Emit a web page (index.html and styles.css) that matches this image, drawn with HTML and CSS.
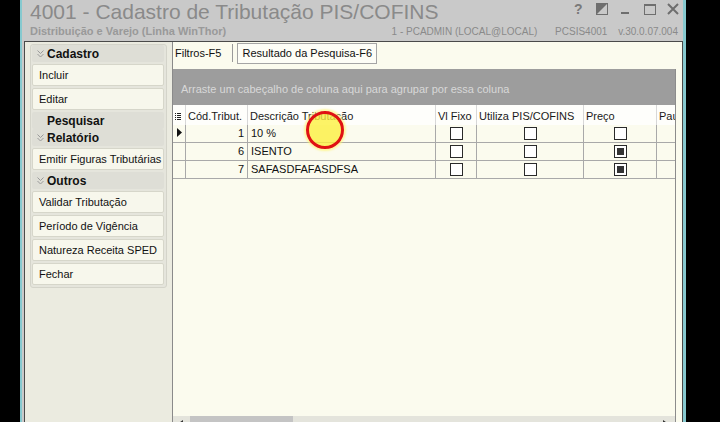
FILE: index.html
```html
<!DOCTYPE html>
<html lang="pt-BR">
<head>
    <meta charset="UTF-8">
    <title>4001 - Cadastro de Tributação PIS/COFINS</title>
    <link rel="stylesheet" href="styles.css">
</head>
<body>
    <div class="window">
        <div class="titlebar">
            <div class="title-left">
                <div class="app-title">4001 - Cadastro de Tributação PIS/COFINS</div>
                <div class="app-sub">Distribuição e Varejo (Linha WinThor)</div>
            </div>
            <div class="title-right">
                <div class="win-controls">
                    <span class="ctl ctl-help">?</span>
                    <svg class="ctl ctl-skin" width="12" height="12" viewBox="0 0 12 12">
                        <rect x="0.5" y="0.5" width="11" height="11" fill="none" stroke="#6e6e6e"/>
                        <polygon points="0,0 12,0 0,12" fill="#6e6e6e"/>
                    </svg>
                    <svg class="ctl ctl-min" width="8" height="12" viewBox="0 0 8 12">
                        <rect x="0" y="9" width="8" height="2" fill="#6e6e6e"/>
                    </svg>
                    <svg class="ctl ctl-max" width="12" height="12" viewBox="0 0 12 12">
                        <rect x="0.5" y="1.5" width="11" height="10" fill="none" stroke="#6e6e6e"/>
                        <rect x="0" y="1" width="12" height="2" fill="#6e6e6e"/>
                    </svg>
                    <svg class="ctl ctl-close" width="12" height="12" viewBox="0 0 12 12">
                        <path d="M1 1 L11 11 M11 1 L1 11" stroke="#6e6e6e" stroke-width="2"/>
                    </svg>
                </div>
                <div class="session-info">
                    <span>1 - PCADMIN (LOCAL@LOCAL)</span>
                    <span class="gap">PCSIS4001</span>
                    <span class="gap-sm">v.30.0.07.004</span>
                </div>
            </div>
        </div>

        <div class="frame">
            <aside class="side">
                <div class="nav">
                    <div class="nav-group">
                        <div class="nav-head">
                            <svg class="chev" width="7" height="8" viewBox="0 0 7 8"><path d="M0.5 0.5 L3.5 3.5 L6.5 0.5 M0.5 4 L3.5 7 L6.5 4" fill="none" stroke="#9a9a9a"/></svg>
                            Cadastro
                        </div>
                        <div class="nav-item">Incluir</div>
                        <div class="nav-item">Editar</div>
                    </div>
                    <div class="nav-group nav-group-flat">
                        <div class="nav-head nav-head-plain">Pesquisar</div>
                    </div>
                    <div class="nav-group">
                        <div class="nav-head">
                            <svg class="chev" width="7" height="8" viewBox="0 0 7 8"><path d="M0.5 0.5 L3.5 3.5 L6.5 0.5 M0.5 4 L3.5 7 L6.5 4" fill="none" stroke="#9a9a9a"/></svg>
                            Relatório
                        </div>
                        <div class="nav-item">Emitir Figuras Tributárias</div>
                    </div>
                    <div class="nav-group">
                        <div class="nav-head">
                            <svg class="chev" width="7" height="8" viewBox="0 0 7 8"><path d="M0.5 0.5 L3.5 3.5 L6.5 0.5 M0.5 4 L3.5 7 L6.5 4" fill="none" stroke="#9a9a9a"/></svg>
                            Outros
                        </div>
                        <div class="nav-item">Validar Tributação</div>
                        <div class="nav-item">Período de Vigência</div>
                        <div class="nav-item">Natureza Receita SPED</div>
                        <div class="nav-item">Fechar</div>
                    </div>
                </div>
            </aside>

            <main class="content">
                <div class="tabs">
                    <div class="tab">Filtros-F5</div>
                    <div class="tab-sep"></div>
                    <div class="tab tab-active">Resultado da Pesquisa-F6</div>
                </div>

                <div class="grid">
                    <div class="group-panel">Arraste um cabeçalho de coluna aqui para agrupar por essa coluna</div>

                    <div class="grid-head">
                        <div class="cell-ind">
                            <svg width="6" height="8" viewBox="0 0 6 8">
                                <path d="M0 0.5 H1 M2 0.5 H6 M0 2.5 H1 M2 2.5 H6 M0 4.5 H1 M2 4.5 H6 M0 6.5 H1 M2 6.5 H6" stroke="#222" stroke-width="1"/>
                            </svg>
                        </div>
                        <div>Cód.Tribut.</div>
                        <div>Descrição Tributação</div>
                        <div>Vl Fixo</div>
                        <div>Utiliza PIS/COFINS</div>
                        <div>Preço</div>
                        <div class="cell-clip">Pau</div>
                    </div>

                    <div class="grid-row">
                        <div class="cell-ind">
                            <svg width="5" height="9" viewBox="0 0 5 9"><polygon points="0,0 5,4.5 0,9" fill="#111"/></svg>
                        </div>
                        <div class="num">1</div>
                        <div>10 %</div>
                        <div class="cell-chk"><span class="chk"></span></div>
                        <div class="cell-chk"><span class="chk"></span></div>
                        <div class="cell-chk"><span class="chk"></span></div>
                        <div></div>
                    </div>
                    <div class="grid-row">
                        <div class="cell-ind"></div>
                        <div class="num">6</div>
                        <div>ISENTO</div>
                        <div class="cell-chk"><span class="chk"></span></div>
                        <div class="cell-chk"><span class="chk"></span></div>
                        <div class="cell-chk"><span class="chk on"></span></div>
                        <div></div>
                    </div>
                    <div class="grid-row">
                        <div class="cell-ind"></div>
                        <div class="num">7</div>
                        <div>SAFASDFAFASDFSA</div>
                        <div class="cell-chk"><span class="chk"></span></div>
                        <div class="cell-chk"><span class="chk"></span></div>
                        <div class="cell-chk"><span class="chk on"></span></div>
                        <div></div>
                    </div>

                    <div class="grid-fill"></div>

                    <div class="hscroll">
                        <div class="sb-btn">
                            <svg width="5" height="7" viewBox="0 0 5 7"><polygon points="5,0 0,3.5 5,7" fill="#333"/></svg>
                        </div>
                        <div class="sb-thumb"></div>
                        <div class="sb-track"></div>
                        <div class="sb-btn">
                            <svg width="5" height="7" viewBox="0 0 5 7"><polygon points="0,0 5,3.5 0,7" fill="#333"/></svg>
                        </div>
                    </div>
                </div>
            </main>
        </div>
    </div>

    <!-- click highlight left by the screen recorder -->
    <div class="cursor-mark"></div>
</body>
</html>
```

FILE: styles.css
```css
* {
    margin: 0;
    padding: 0;
    box-sizing: border-box;
}

body {
    width: 720px;
    height: 422px;
    overflow: hidden;
    position: relative;
    background: #000;
    font-family: "Liberation Sans", Arial, sans-serif;
    color: #111;
}

.window {
    margin-left: 20px;
    width: 666px;
    height: 433px;
    border-left: 2px solid #86c9cf;
    border-right: 3px solid #86c9cf;
    background: #c9c9c9;
    display: flex;
    flex-direction: column;
}

/* title bar */
.titlebar {
    height: 41px;
    flex-shrink: 0;
    display: flex;
    justify-content: space-between;
    padding-left: 8px;
    color: #8a8a8a;
}

.title-left {
    flex: 1;
    min-width: 0;
    white-space: nowrap;
}

.app-title {
    font-size: 21px;
    line-height: 24px;
}

.app-sub {
    margin-top: 1px;
    font-size: 11px;
    font-weight: bold;
    line-height: 13px;
    color: #999;
}

.title-right {
    flex-shrink: 0;
    display: flex;
    flex-direction: column;
    align-items: flex-end;
}

.win-controls {
    height: 24px;
    padding-top: 3px;
    padding-right: 4px;
    display: flex;
    align-items: flex-start;
}

.ctl {
    display: block;
}

.ctl-help {
    width: 8px;
    font-size: 14px;
    line-height: 12px;
    font-weight: bold;
    color: #7a7a7a;
}

.ctl-skin { margin-left: 14px; }
.ctl-min { margin-left: 13px; }
.ctl-max { margin-left: 15px; }
.ctl-close { margin-left: 11px; }

.session-info {
    margin-top: 1px;
    padding-right: 5px;
    font-size: 10px;
    line-height: 13px;
    white-space: nowrap;
}

.session-info .gap { margin-left: 15px; }
.session-info .gap-sm { margin-left: 8px; }

/* main frame */
.frame {
    flex: 1;
    min-height: 0;
    margin-left: 2px;
    width: 659px;
    border: 1px solid #4a4a4a;
    border-bottom: none;
    display: flex;
}

.side {
    width: 148px;
    flex-shrink: 0;
    background: #ebebe0;
    border-right: 1px solid #8a8a8a;
}

.nav {
    margin: 2px 5px 0;
    padding: 0 2px 0 1px;
    border: 1px solid #d4d4ca;
    border-radius: 3px;
    background: #e5e5dc;
}

.nav-group {
    padding-bottom: 2px;
}

.nav-group-flat {
    padding-bottom: 0;
}

.nav-head {
    height: 17px;
    padding-left: 5px;
    display: flex;
    align-items: center;
    gap: 3px;
    font-size: 12px;
    font-weight: bold;
    color: #111;
    background: #deded6;
    border-radius: 2px;
}

.nav-head-plain {
    padding-left: 15px;
}

.nav-item {
    height: 22px;
    margin-top: 2px;
    padding-left: 6px;
    border: 1px solid #d6d6ca;
    border-radius: 2px;
    background: #f7f7ec;
    font-size: 11px;
    line-height: 20px;
    white-space: nowrap;
}

/* content */
.content {
    flex: 1;
    min-width: 0;
    background: #fbfbee;
    display: flex;
    flex-direction: column;
}

.tabs {
    height: 27px;
    flex-shrink: 0;
    padding: 1px 0 0 2px;
    display: flex;
    align-items: flex-start;
    font-size: 11px;
}

.tab {
    line-height: 20px;
    white-space: nowrap;
}

.tab-sep {
    width: 1px;
    height: 18px;
    margin: 1px 4px 0 11px;
    background: #9a9a9a;
}

.tab-active {
    width: 140px;
    height: 21px;
    padding-left: 4px;
    line-height: 19px;
    border: 1px solid #a5a5a5;
    background: #fdfdf6;
}

/* grid */
.grid {
    flex: 1;
    width: 503px;
    border-right: 1px solid #8c8c8c;
    display: flex;
    flex-direction: column;
}

.group-panel {
    height: 36px;
    flex-shrink: 0;
    padding: 4px 0 0 8px;
    line-height: 32px;
    background: #9d9d9d;
    color: #d8d8d8;
    font-size: 11px;
    white-space: nowrap;
}

.grid-head,
.grid-row {
    display: grid;
    grid-template-columns: 13px 62px 188px 41px 107px 73px 1fr;
    flex-shrink: 0;
    font-size: 11px;
}

.grid-head {
    height: 20px;
    background: #fefefb;
    color: #1a1a1a;
}

.grid-head > div {
    padding: 3px 0 0 2px;
    line-height: 17px;
    border-right: 1px solid #d8d8d8;
    white-space: nowrap;
    overflow: hidden;
}

.grid-head > div:last-child,
.grid-row > div:last-child {
    border-right: none;
}

.grid-head .cell-clip {
    text-overflow: clip;
}

.grid-head .cell-ind {
    padding: 8px 0 0 2px;
}

.grid-head .cell-ind svg {
    display: block;
}

.grid-row {
    height: 18px;
    border-bottom: 1px solid #a9a9a9;
}

.grid-row > div {
    padding: 0 3px;
    line-height: 17px;
    border-right: 1px solid #a9a9a9;
    white-space: nowrap;
    overflow: hidden;
}

.grid-row .num {
    text-align: right;
}

.grid-row .cell-ind {
    padding: 3px 0 0 4px;
}

.grid-row .cell-ind svg {
    display: block;
}

.cell-chk {
    display: flex;
    justify-content: center;
    align-items: center;
}

.chk {
    width: 13px;
    height: 13px;
    border: 1px solid #2a2a2a;
    background: #fff;
}

.chk.on {
    background: #333;
    box-shadow: inset 0 0 0 2px #fff;
}

.grid-fill {
    flex: 1;
}

.hscroll {
    height: 17px;
    flex-shrink: 0;
    display: flex;
    background: #e4e4dc;
}

.sb-btn {
    width: 17px;
    padding: 4px 0 0 5px;
}

.sb-btn svg {
    display: block;
}

.sb-thumb {
    width: 103px;
    background: #c4c4c4;
}

.sb-track {
    flex: 1;
}

.cursor-mark {
    position: absolute;
    left: 306px;
    top: 111px;
    width: 38px;
    height: 38px;
    border: 3px solid #e01212;
    border-radius: 50%;
    background: rgba(252, 240, 60, 0.78);
    box-shadow: 0 0 2px 2px rgba(255, 245, 120, 0.7);
}
```
